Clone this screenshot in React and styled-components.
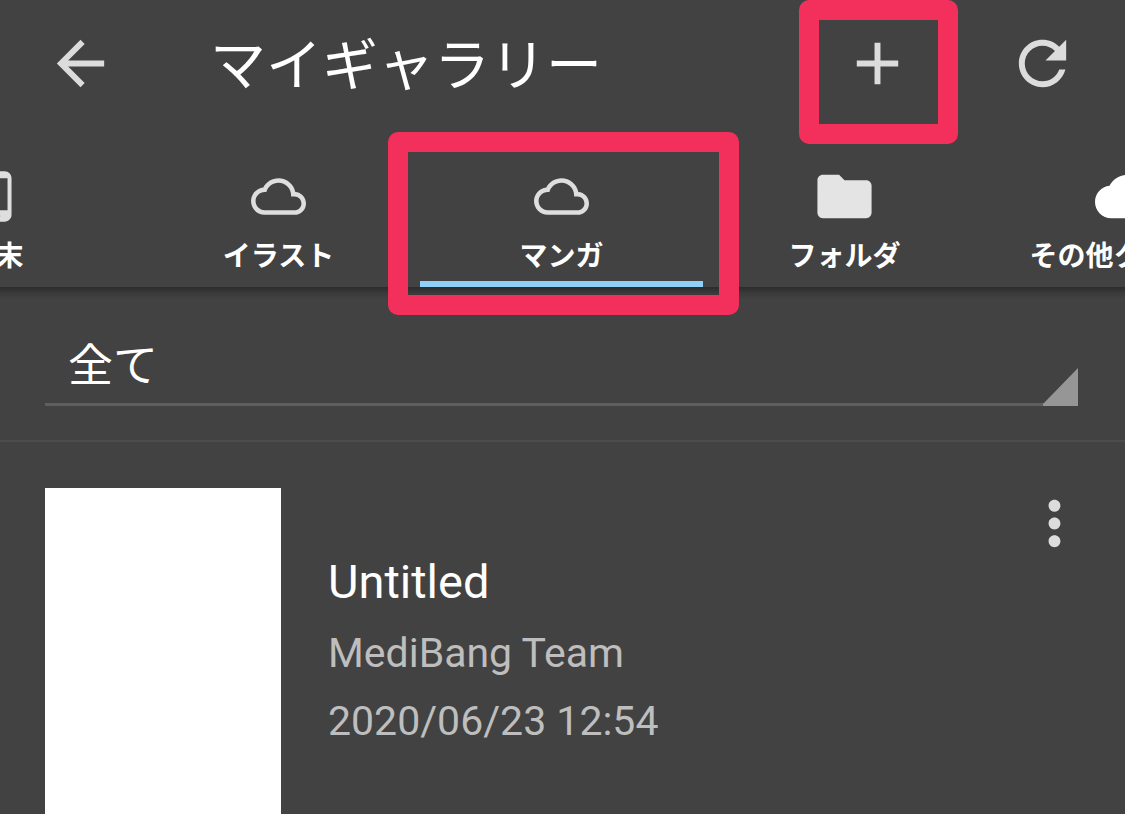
import React from "react";
import styled, { createGlobalStyle, css } from "styled-components";

const GlobalStyle = createGlobalStyle`
  *, *::before, *::after { box-sizing: border-box; }
  body {
    margin: 0;
    background: #424242;
    color: #fff;
    font-family: Roboto, "Noto Sans CJK JP", sans-serif;
  }
  button, select {
    margin: 0;
    padding: 0;
    border: 0;
    background: none;
    color: inherit;
    font: inherit;
  }
`;

const Page = styled.div`
  display: flex;
  flex-direction: column;
  min-height: 100vh;
  overflow-x: clip;
`;

const AppBar = styled.header`
  position: relative;
  z-index: 1;
  background: #424242;

  &::after {
    content: "";
    position: absolute;
    top: 100%;
    left: 0;
    right: 0;
    height: 12px;
    background: linear-gradient(rgba(0, 0, 0, 0.34), rgba(0, 0, 0, 0.12) 50%, transparent);
    pointer-events: none;
  }
`;

const Toolbar = styled.div`
  display: flex;
  align-items: center;
  height: 126px;
  padding: 0 47px 0 45px;
`;

const Title = styled.h1`
  flex: 1;
  margin: 0;
  padding: 6px 0 0 94px;
  font-size: 56px;
  line-height: 80px;
  font-weight: 400;
  white-space: nowrap;
`;

const Actions = styled.div`
  display: flex;
  gap: 94px;
`;

const IconButton = styled.button`
  position: relative;
  display: flex;
  flex: none;
  width: 71px;
  height: 71px;
  color: #dcdcdc;
`;

const Icon = styled.svg`
  display: block;
  width: ${(p) => p.$size}px;
  height: ${(p) => p.$size}px;
  fill: currentColor;
`;

const Highlight = styled.span`
  position: absolute;
  z-index: 1;
  inset: ${(p) => p.$inset};
  border: 20px solid #f2305b;
  border-radius: 10px;
  pointer-events: none;
`;

const Tabs = styled.nav`
  display: flex;
  justify-content: center;
  padding-right: 2px;
`;

const Tab = styled.button`
  position: relative;
  display: flex;
  flex: 0 0 283px;
  flex-direction: column;
  align-items: center;
  gap: 12px;
  height: 161px;
  padding-top: 38px;
  border-bottom: 6px solid transparent;
  ${(p) =>
    p.$active &&
    css`
      border-bottom-color: #90d0f8;
    `}
`;

const TabIcon = styled.span`
  display: flex;
  align-items: center;
  height: 65px;
  color: ${(p) => p.$color};
`;

const TabLabel = styled.span`
  font-size: 28px;
  line-height: 32px;
  font-weight: 700;
  white-space: nowrap;
`;

const Filter = styled.div`
  padding: 38px 47px 34px 45px;
  border-bottom: 2px solid #4c4c4c;
`;

const SelectBox = styled.div`
  display: flex;
  align-items: flex-end;
  height: 81px;
  border-bottom: 3px solid #5f5f5f;
`;

const Select = styled.select`
  flex: 1;
  height: 78px;
  padding: 6px 0 0 23px;
  appearance: none;
  font-size: 45px;
  line-height: 72px;
`;

const Corner = styled.svg`
  display: block;
  width: 35px;
  height: 38px;
  margin-bottom: -3px;
  fill: #969696;
`;

const Work = styled.article`
  display: flex;
  flex: 1;
  padding: 46px 35px 0 45px;
`;

const Content = styled.main`
  display: flex;
  flex: 1;
  flex-direction: column;
`;

const Thumbnail = styled.div`
  flex: none;
  width: 236px;
  min-height: 320px;
  background: #fff;
`;

const Info = styled.div`
  flex: 1;
  padding: 57px 0 0 47px;
`;

const WorkTitle = styled.h2`
  margin: 0;
  font-size: 47px;
  line-height: 74px;
  font-weight: 400;
`;

const Meta = styled.p`
  margin: 0;
  font-size: 41px;
  line-height: 68px;
  color: #bebebe;
`;

const paths = {
  back: "M20 11H7.83l5.59-5.59L12 4l-8 8 8 8 1.41-1.41L7.83 13H20v-2z",
  add: "M19 13h-6v6h-2v-6H5v-2h6V5h2v6h6v2z",
  refresh:
    "M17.65 6.35C16.2 4.9 14.21 4 12 4c-4.42 0-7.99 3.58-7.99 8s3.57 8 7.99 8c3.73 0 6.84-2.55 7.73-6h-2.08c-.82 2.33-3.04 4-5.65 4-3.31 0-6-2.69-6-6s2.69-6 6-6c1.66 0 3.14.69 4.22 1.78L13 11h7V4l-2.35 2.35z",
  more: "M12 8c1.1 0 2-.9 2-2s-.9-2-2-2-2 .9-2 2 .9 2 2 2zm0 2c-1.1 0-2 .9-2 2s.9 2 2 2 2-.9 2-2-.9-2-2-2zm0 6c-1.1 0-2 .9-2 2s.9 2 2 2 2-.9 2-2-.9-2-2-2z",
  phone:
    "M16 1H8C6.34 1 5 2.34 5 4v16c0 1.66 1.34 3 3 3h8c1.66 0 3-1.34 3-3V4c0-1.66-1.34-3-3-3zm-2 20h-4v-1h4v1zm3.25-3H6.75V4h10.5v14z",
  cloudOutline:
    "M19.35 10.04C18.67 6.59 15.64 4 12 4 9.11 4 6.6 5.64 5.35 8.04 2.34 8.36 0 10.91 0 14c0 3.31 2.69 6 6 6h13c2.76 0 5-2.24 5-5 0-2.64-2.05-4.78-4.65-4.96zM19 18H6c-2.21 0-4-1.79-4-4s1.79-4 4-4h.71C7.37 7.69 9.48 6 12 6c3.04 0 5.5 2.46 5.5 5.5v.5H19c1.66 0 3 1.34 3 3s-1.34 3-3 3z",
  folder:
    "M10 4H4c-1.1 0-1.99.9-1.99 2L2 18c0 1.1.9 2 2 2h16c1.1 0 2-.9 2-2V8c0-1.1-.9-2-2-2h-8l-2-2z",
  cloud:
    "M19.35 10.04C18.67 6.59 15.64 4 12 4 9.11 4 6.6 5.64 5.35 8.04 2.34 8.36 0 10.91 0 14c0 3.31 2.69 6 6 6h13c2.76 0 5-2.24 5-5 0-2.64-2.05-4.78-4.65-4.96z",
};

const Glyph = ({ name, size = 71 }) => (
  <Icon $size={size} viewBox="0 0 24 24" aria-hidden="true">
    <path d={paths[name]} />
  </Icon>
);

const tabs = [
  { label: "端末", icon: "phone", size: 55, color: "#dedede" },
  { label: "イラスト", icon: "cloudOutline", size: 55, color: "#dedede" },
  { label: "マンガ", icon: "cloudOutline", size: 55, color: "#dedede", active: true },
  { label: "フォルダ", icon: "folder", size: 65, color: "#e4e4e4" },
  { label: "その他クラウド", icon: "cloud", size: 65, color: "#ffffff" },
];

export default function App() {
  return (
    <>
      <GlobalStyle />
      <Page>
        <AppBar>
          <Toolbar>
            <IconButton type="button" aria-label="戻る">
              <Glyph name="back" />
            </IconButton>
            <Title>マイギャラリー</Title>
            <Actions>
              <IconButton type="button" aria-label="追加">
                <Glyph name="add" />
                <Highlight $inset="-28px -45px -45px -43px" />
              </IconButton>
              <IconButton type="button" aria-label="更新">
                <Glyph name="refresh" />
              </IconButton>
            </Actions>
          </Toolbar>
          <Tabs>
            {tabs.map((tab) => (
              <Tab
                key={tab.label}
                type="button"
                $active={tab.active}
                aria-current={tab.active ? "page" : undefined}
              >
                <TabIcon $color={tab.color}>
                  <Glyph name={tab.icon} size={tab.size} />
                </TabIcon>
                <TabLabel>{tab.label}</TabLabel>
                {tab.active && <Highlight $inset="6px -36px -34px -32px" />}
              </Tab>
            ))}
          </Tabs>
        </AppBar>

        <Content>
          <Filter>
            <SelectBox>
              <Select aria-label="表示" defaultValue="all">
                <option value="all">全て</option>
              </Select>
              <Corner viewBox="0 0 35 38" aria-hidden="true">
                <path d="M35 0v38H0v-2z" />
              </Corner>
            </SelectBox>
          </Filter>
          <Work>
            <Thumbnail />
            <Info>
              <WorkTitle>Untitled</WorkTitle>
              <Meta>MediBang Team</Meta>
              <Meta>2020/06/23 12:54</Meta>
            </Info>
            <IconButton type="button" aria-label="メニュー">
              <Glyph name="more" />
            </IconButton>
          </Work>
        </Content>
      </Page>
    </>
  );
}
